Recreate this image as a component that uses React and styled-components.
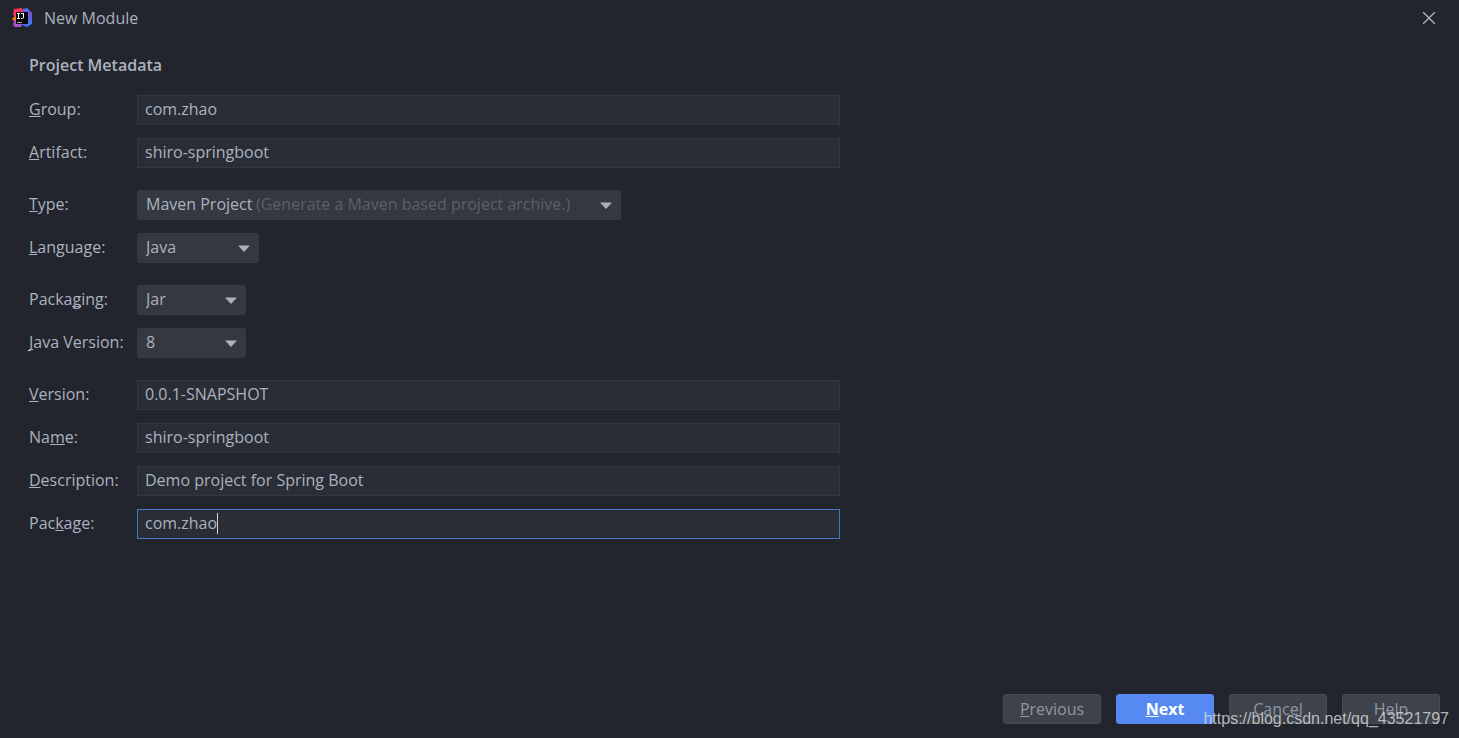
import React, { useState } from 'react';
import styled, { createGlobalStyle } from 'styled-components';

const groups = [
    [
        { id: 'group', label: ['', 'G', 'roup:'], value: 'com.zhao' },
        { id: 'artifact', label: ['', 'A', 'rtifact:'], value: 'shiro-springboot' }
    ],
    [
        {
            id: 'type',
            label: ['', 'T', 'ype:'],
            value: 'Maven Project',
            hint: '(Generate a Maven based project archive.)',
            options: ['Maven Project', 'Gradle Project'],
            width: 484
        },
        { id: 'language', label: ['', 'L', 'anguage:'], value: 'Java', options: ['Java', 'Kotlin', 'Groovy'], width: 122 }
    ],
    [
        { id: 'packaging', label: ['Packa', 'g', 'ing:'], value: 'Jar', options: ['Jar', 'War'], width: 109 },
        { id: 'javaVersion', label: ['', 'J', 'ava Version:'], value: '8', options: ['8', '11', '16'], width: 109 }
    ],
    [
        { id: 'version', label: ['', 'V', 'ersion:'], value: '0.0.1-SNAPSHOT' },
        { id: 'name', label: ['Na', 'm', 'e:'], value: 'shiro-springboot' },
        { id: 'description', label: ['', 'D', 'escription:'], value: 'Demo project for Spring Boot' },
        { id: 'package', label: ['Pac', 'k', 'age:'], value: 'com.zhao', active: true }
    ]
];

function Mnemonic({ parts }) {
    return (
        <>
            {parts[0]}<u>{parts[1]}</u>{parts[2]}
        </>
    );
}

function Field({ field }) {
    const [value, setValue] = useState(field.value);
    const handleChange = (event) => setValue(event.target.value);

    return (
        <Row>
            <Label htmlFor={field.id}><Mnemonic parts={field.label} /></Label>
            {field.options ? (
                <SelectBox $width={field.width}>
                    <Select id={field.id} value={value} onChange={handleChange}>
                        {field.options.map((option) => <option key={option}>{option}</option>)}
                    </Select>
                    {field.hint && value === field.value && <Hint>{field.hint}</Hint>}
                    <Arrow viewBox="0 0 12 7" aria-hidden="true">
                        <path d="M0 0.5h12L6 7z" fill="currentColor" />
                    </Arrow>
                </SelectBox>
            ) : (
                <InputBox>
                    <Input id={field.id} type="text" value={value} onChange={handleChange} $active={field.active} />
                    {field.active && <Caret />}
                </InputBox>
            )}
        </Row>
    );
}

function Logo() {
    return (
        <svg width="20" height="20" viewBox="0 0 20 20" aria-hidden="true">
            <path d="M2 1L10 0L12 5L6 10L1 7z" fill="#fe315d" />
            <path d="M0 11L4 7L7 12L4 15z" fill="#f97a12" />
            <path d="M2 13L6 10L10 16L9 19L3 19L1 17z" fill="#b04fd0" />
            <path d="M11 1L15 0L20 5V16L15 19L8 16L10 6z" fill="#4772ee" />
            <path d="M15 0L20 5V12L15 8z" fill="#7357d8" />
            <path d="M4 4h12v12H4z" fill="#08080a" />
            <path d="M5 5.5h3M6.5 5.5v5M5 10.5h3M9 5.5h3M11.5 5.5v4q0 1-1 1h-1.5" stroke="#fff" strokeWidth="1" fill="none" />
            <path d="M5 14.5h5" stroke="#aaa" strokeWidth="1" />
        </svg>
    );
}

export default function App() {
    return (
        <>
            <GlobalStyle />
            <Dialog>
                <TitleBar>
                    <Logo />
                    <Title>New Module</Title>
                    <CloseButton type="button" aria-label="Close">
                        <svg width="12" height="12" viewBox="0 0 12 12">
                            <path d="M0 0L12 12M12 0L0 12" stroke="currentColor" strokeWidth="1.3" />
                        </svg>
                    </CloseButton>
                </TitleBar>
                <Form>
                    <Heading>Project Metadata</Heading>
                    {groups.map((fields) => (
                        <Group key={fields[0].id}>
                            {fields.map((field) => <Field key={field.id} field={field} />)}
                        </Group>
                    ))}
                </Form>
                <Footer>
                    <Button type="button"><Mnemonic parts={['', 'P', 'revious']} /></Button>
                    <Button type="button" $primary><Mnemonic parts={['', 'N', 'ext']} /></Button>
                    <Button type="button">Cancel</Button>
                    <Button type="button">Help</Button>
                </Footer>
                <Watermark>https://blog.csdn.net/qq_43521797</Watermark>
            </Dialog>
        </>
    );
}

const GlobalStyle = createGlobalStyle`
    * {
        box-sizing: border-box;
    }
    body {
        margin: 0;
        background-color: #22252d;
        color: #abb2bf;
        font: 16px/22px "Open Sans", "Noto Sans", sans-serif;
    }
    input, select, button {
        font: inherit;
        color: inherit;
    }
    u {
        text-underline-offset: 1px;
        text-decoration-thickness: 1px;
        text-decoration-skip-ink: none;
    }
`;

const Dialog = styled.div`
    position: relative;
    display: flex;
    flex-direction: column;
    min-height: 100vh;
`;

const TitleBar = styled.header`
    display: flex;
    align-items: center;
    height: 36px;
    padding: 0 24px 0 12px;
`;

const Title = styled.h1`
    flex: 1;
    margin: 0 0 0 12px;
    font-size: 16px;
    font-weight: 400;
`;

const CloseButton = styled.button`
    display: flex;
    padding: 0;
    border: 0;
    background: none;
    color: #b4b6b9;
`;

const Form = styled.form`
    display: flex;
    flex-direction: column;
    gap: 22px;
    width: 100%;
    max-width: 840px;
    padding: 18px 0 0 29px;
`;

const Heading = styled.h2`
    margin: 0 0 -3px;
    font-size: 16px;
    line-height: 22px;
    font-weight: 600;
`;

const Group = styled.div`
    display: flex;
    flex-direction: column;
    gap: 13px;
`;

const Row = styled.div`
    display: grid;
    grid-template-columns: 108px 1fr;
    height: 30px;
`;

const Label = styled.label`
    line-height: 28px;
    white-space: nowrap;
`;

const InputBox = styled.div`
    position: relative;
    height: 30px;
`;

const Input = styled.input`
    width: 100%;
    height: 100%;
    padding: 0 7px 2px;
    border: 1px solid ${({ $active }) => ($active ? '#4a74cc' : '#333740')};
    outline: none;
    background-color: #292d35;
`;

const Caret = styled.span`
    position: absolute;
    top: 4px;
    left: 80px;
    width: 1px;
    height: 21px;
    background-color: #d0d3d8;
`;

const SelectBox = styled.div`
    position: relative;
    width: ${({ $width }) => $width}px;
    height: 30px;
`;

const Select = styled.select`
    appearance: none;
    width: 100%;
    height: 100%;
    padding: 0 9px 2px;
    border: 0;
    border-radius: 3px;
    background-color: #343841;
`;

const Hint = styled.span`
    position: absolute;
    top: 3px;
    left: 119px;
    color: #5a606d;
    pointer-events: none;
`;

const Arrow = styled.svg`
    position: absolute;
    top: 12px;
    right: 9px;
    width: 12px;
    height: 7px;
    pointer-events: none;
`;

const Footer = styled.footer`
    display: flex;
    justify-content: flex-end;
    gap: 15px;
    margin-top: auto;
    padding: 0 19px 14px;
`;

const Button = styled.button`
    width: 98px;
    height: 30px;
    padding: 0;
    border: 1px solid ${({ $primary }) => ($primary ? '#568af2' : '#464c56')};
    border-radius: 3px;
    background-color: ${({ $primary }) => ($primary ? '#568af2' : '#3d424b')};
    color: ${({ $primary }) => ($primary ? '#ffffff' : '#9097a3')};
    font-weight: ${({ $primary }) => ($primary ? 700 : 400)};
`;

const Watermark = styled.span`
    position: absolute;
    right: 10px;
    bottom: 8px;
    color: rgba(220, 220, 220, 0.8);
    font-family: "Liberation Sans", Arial, sans-serif;
    pointer-events: none;
`;
